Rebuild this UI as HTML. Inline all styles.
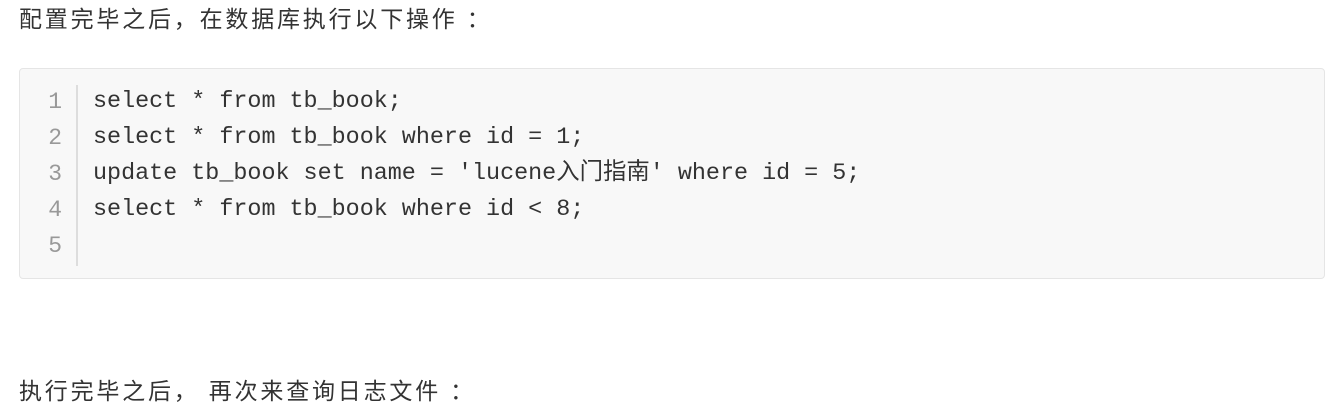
<!DOCTYPE html>
<html><head><meta charset="utf-8"><style>
body{margin:0;width:1342px;height:418px;background:#fff;overflow:hidden;position:relative;font-family:"Liberation Sans","Noto Sans CJK SC",sans-serif;color:#333}
.p{position:absolute;left:19px;font-size:23px;line-height:30px;letter-spacing:2.8px;white-space:pre}
.code{position:absolute;left:19px;top:68px;width:1304px;height:209px;background:#f8f8f8;border:1px solid #e5e5e5;border-radius:4px}
.bar{position:absolute;left:56px;top:16px;width:2px;height:181px;background:#ddd}
.ln{position:absolute;left:0;width:42px;text-align:right;color:#999;font-family:"Liberation Mono",monospace;font-size:23px;line-height:30px}
.cl{position:absolute;left:73px;font-family:"Liberation Mono","Noto Sans CJK SC",monospace;font-size:23.4px;line-height:30px;height:30px;color:#333;white-space:pre}
</style></head><body>
<div class="p" style="top:4px">配置完毕之后，在数据库执行以下操作 ：</div>
<div class="code">
<div class="bar"></div>
<div class="ln" style="top:18px">1</div><div class="cl" style="top:18px">select * from tb_book;</div>
<div class="ln" style="top:54px">2</div><div class="cl" style="top:54px">select * from tb_book where id = 1;</div>
<div class="ln" style="top:90px">3</div><div class="cl" style="top:90px">update tb_book set name = 'lucene入门指南' where id = 5;</div>
<div class="ln" style="top:126px">4</div><div class="cl" style="top:126px">select * from tb_book where id &lt; 8;</div>
<div class="ln" style="top:162px">5</div>
</div>
<div class="p" style="top:376px;letter-spacing:2.8px">执行完毕之后， 再次来查询日志文件 ：</div>
</body></html>
